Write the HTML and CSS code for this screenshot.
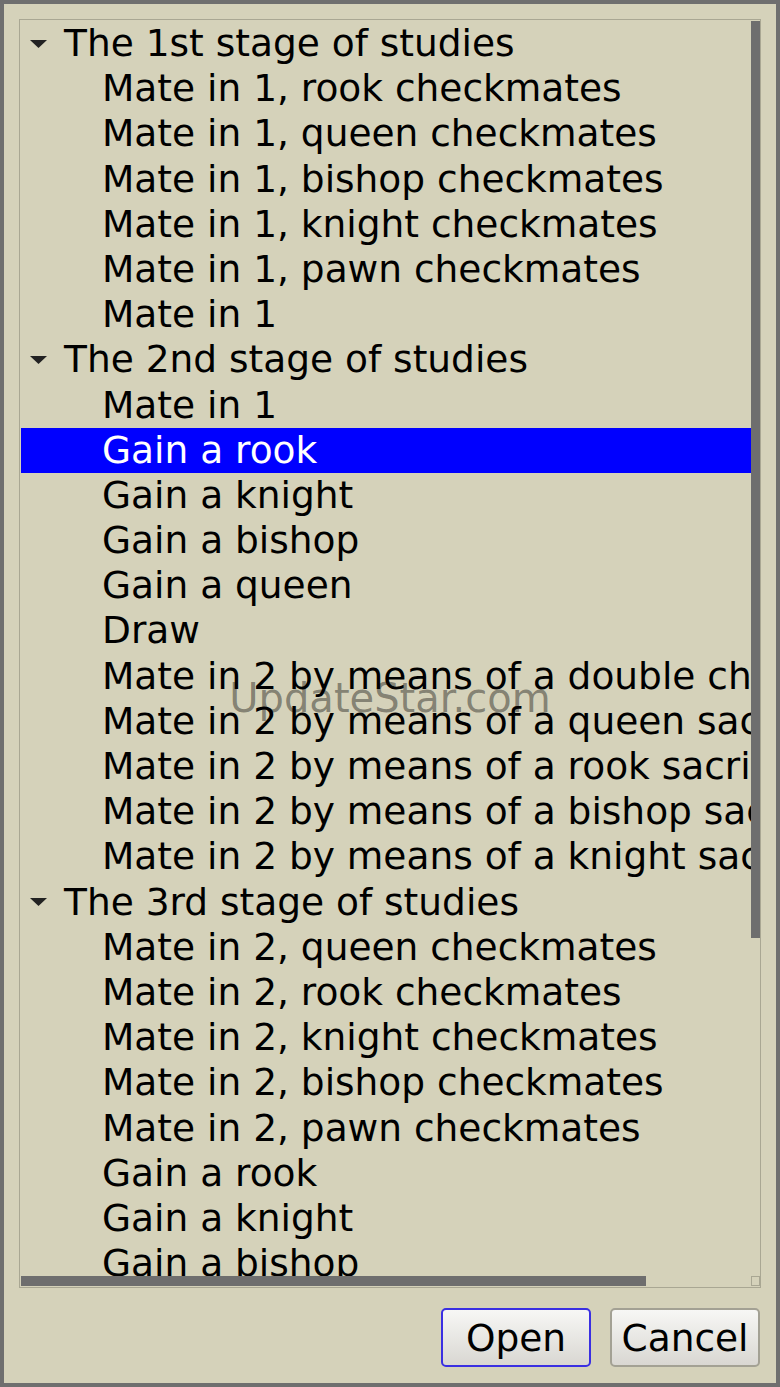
FILE: index.html
```html
<!DOCTYPE html>
<html lang="en">
<head>
    <meta charset="UTF-8">
    <meta name="viewport" content="width=device-width, initial-scale=1.0">
    <title>Open study</title>
    <link rel="stylesheet" href="styles.css">
</head>
<body>

    <div class="window">
        <div class="tree-box">
            <div class="tree-view">
                <div class="row group"><span class="toggle"><svg width="17" height="8" viewBox="0 0 17 8"><polygon points="0,0 17,0 8.5,8" fill="#222"/></svg></span><span class="label">The 1st stage of studies</span></div>
                <div class="row item"><span class="label">Mate in 1, rook checkmates</span></div>
                <div class="row item"><span class="label">Mate in 1, queen checkmates</span></div>
                <div class="row item"><span class="label">Mate in 1, bishop checkmates</span></div>
                <div class="row item"><span class="label">Mate in 1, knight checkmates</span></div>
                <div class="row item"><span class="label">Mate in 1, pawn checkmates</span></div>
                <div class="row item"><span class="label">Mate in 1</span></div>

                <div class="row group"><span class="toggle"><svg width="17" height="8" viewBox="0 0 17 8"><polygon points="0,0 17,0 8.5,8" fill="#222"/></svg></span><span class="label">The 2nd stage of studies</span></div>
                <div class="row item"><span class="label">Mate in 1</span></div>
                <div class="row item selected"><span class="label">Gain a rook</span></div>
                <div class="row item"><span class="label">Gain a knight</span></div>
                <div class="row item"><span class="label">Gain a bishop</span></div>
                <div class="row item"><span class="label">Gain a queen</span></div>
                <div class="row item"><span class="label">Draw</span></div>
                <div class="row item"><span class="label">Mate in 2 by means of a double check</span></div>
                <div class="row item"><span class="label">Mate in 2 by means of a queen sacrifice</span></div>
                <div class="row item"><span class="label">Mate in 2 by means of a rook sacrifice</span></div>
                <div class="row item"><span class="label">Mate in 2 by means of a bishop sacrifice</span></div>
                <div class="row item"><span class="label">Mate in 2 by means of a knight sacrifice</span></div>

                <div class="row group"><span class="toggle"><svg width="17" height="8" viewBox="0 0 17 8"><polygon points="0,0 17,0 8.5,8" fill="#222"/></svg></span><span class="label">The 3rd stage of studies</span></div>
                <div class="row item"><span class="label">Mate in 2, queen checkmates</span></div>
                <div class="row item"><span class="label">Mate in 2, rook checkmates</span></div>
                <div class="row item"><span class="label">Mate in 2, knight checkmates</span></div>
                <div class="row item"><span class="label">Mate in 2, bishop checkmates</span></div>
                <div class="row item"><span class="label">Mate in 2, pawn checkmates</span></div>
                <div class="row item"><span class="label">Gain a rook</span></div>
                <div class="row item"><span class="label">Gain a knight</span></div>
                <div class="row item"><span class="label">Gain a bishop</span></div>
            </div>
            <div class="vscroll"><div class="thumb"></div></div>
            <div class="hscroll"><div class="thumb"></div></div>
            <div class="corner"></div>
        </div>

        <div class="buttons">
            <button class="btn default">Open</button>
            <button class="btn">Cancel</button>
        </div>

        <!-- site watermark over the list -->
        <div class="watermark">UpdateStar.com</div>
    </div>

</body>
</html>
```

FILE: styles.css
```css
body {
    margin: 0;
    font-family: "DejaVu Sans", sans-serif;
    background-color: #6f6f6f;
}

.window {
    position: relative;
    width: 780px;
    height: 1387px;
    box-sizing: border-box;
    border: 4px solid #6f6f6f;
    padding: 15px;
    background-color: #d5d2ba;
}

/* Tree list with its scrollbars */
.tree-box {
    display: grid;
    grid-template-columns: 1fr 9px;
    grid-template-rows: 1fr 10px;
    height: 1269px;
    box-sizing: border-box;
    border: 1px solid #a9a793;
    padding: 1px 0 1px 1px;
}

.tree-view {
    overflow: hidden;
    min-width: 0;
}

.row {
    display: flex;
    align-items: center;
    height: 41.2px;
    padding: 2px 0 2px;
    white-space: nowrap;
    font-size: 37.5px;
    line-height: 41.2px;
    color: #000;
}

.row.group {
    padding-left: 9px;
}

.toggle {
    display: flex;
    width: 34px;
    flex-shrink: 0;
}

.row.item {
    padding-left: 81px;
}

.row.selected {
    background-color: #0000ff;
    color: #fff;
}

.vscroll .thumb {
    height: 917px;
    background-color: #6e6e6e;
}

.hscroll .thumb {
    width: 625px;
    height: 100%;
    background-color: #6e6e6e;
}

.corner {
    border: 1px solid #a9a793;
    box-sizing: border-box;
}

/* Dialog buttons */
.buttons {
    display: flex;
    justify-content: flex-end;
    gap: 19px;
    margin-top: 20px;
    padding-right: 1px;
}

.btn {
    width: 150px;
    height: 59px;
    padding: 0;
    border: 2px solid #a3a194;
    border-radius: 5px;
    background: linear-gradient(#f7f7f5, #d9d7d2);
    font-family: "DejaVu Sans", sans-serif;
    font-size: 37.5px;
    color: #000;
}

.btn.default {
    border-color: #3a2fe2;
}

.watermark {
    position: absolute;
    top: 671px;
    left: 0;
    right: 0;
    text-align: center;
    font-size: 40px;
    line-height: normal;
    color: rgba(0, 0, 0, 0.4);
    pointer-events: none;
}
```
